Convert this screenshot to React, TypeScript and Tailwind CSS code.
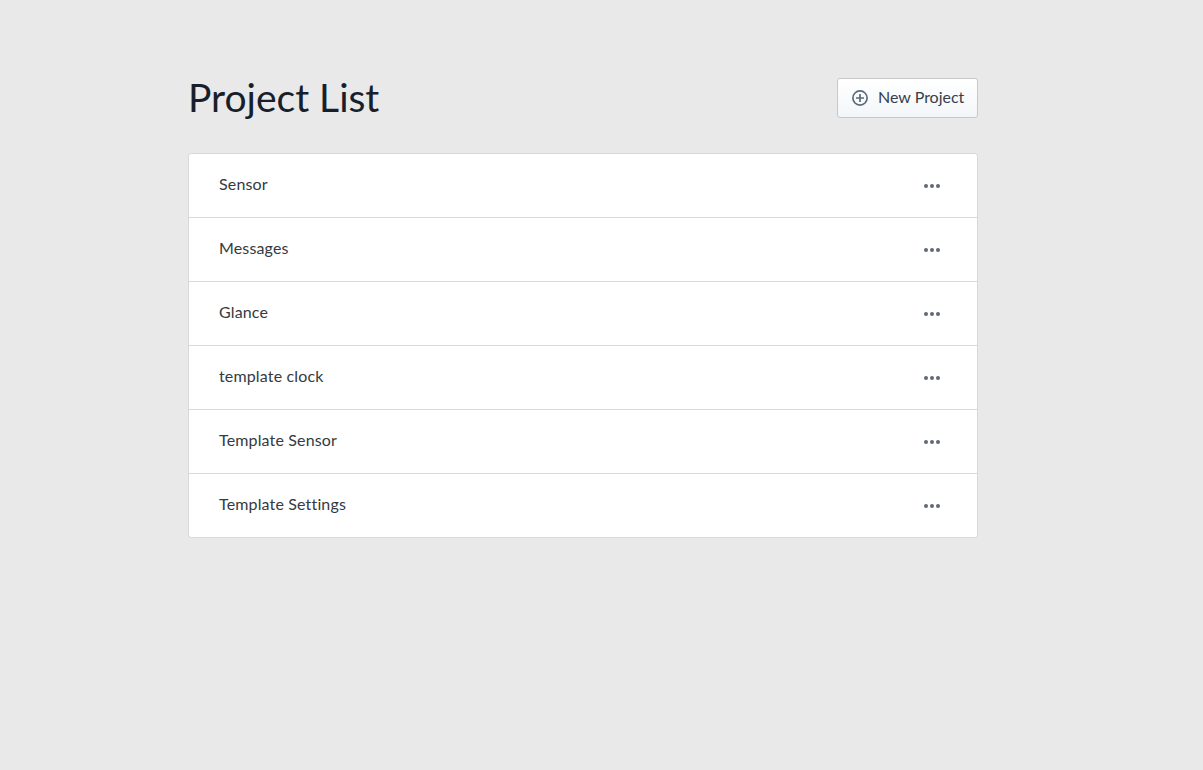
import React from 'react';

const projects = ['Sensor', 'Messages', 'Glance', 'template clock', 'Template Sensor', 'Template Settings'];

function PlusCircle() {
  return (
    <svg viewBox="0 0 16 16" className="h-4 w-4 text-[#5b6b7a]" fill="none" stroke="currentColor" aria-hidden="true">
      <circle cx="8" cy="8" r="7.1" strokeWidth="1.7" />
      <path d="M8 4v8M4 8h8" strokeWidth="1.7" />
    </svg>
  );
}

function Dots() {
  return (
    <svg viewBox="0 0 16 4" className="h-1 w-4 text-[#5f6a76]" fill="currentColor" aria-hidden="true">
      <circle cx="2" cy="2" r="2" />
      <circle cx="8" cy="2" r="2" />
      <circle cx="14" cy="2" r="2" />
    </svg>
  );
}

export default function App() {
  return (
    <div className="min-h-[770px] bg-[#e9e9e9] pl-[188px] pt-[78px] font-['Lato','Open_Sans',sans-serif]">
      <div className="w-[790px]">
        <div className="flex h-10 items-center justify-between">
          <h1 className="text-[39px] leading-[38px] pb-[2px] font-normal text-[#17202a]">Project List</h1>
          <button
            type="button"
            className="flex h-10 w-[141px] items-center rounded-[3px] border border-[#c6c9cc] bg-gradient-to-b from-white to-[#f3f6f9] pl-[14px] text-[16px] text-[#36404a]"
          >
            <PlusCircle />
            <span className="ml-[10px] pb-[2px]">New Project</span>
          </button>
        </div>

        <div className="mt-[35px] rounded-[3px] border border-[#d9d9d9] bg-white">
          {projects.map((name, i) => (
            <div
              key={name}
              className={`flex items-center justify-between pl-[30px] pr-[37px] text-[16px] tracking-[0.15px] text-[#333a40] ${
                i < projects.length - 1 ? 'h-16 border-b border-[#d9d9d9]' : 'h-[63px]'
              }`}
            >
              <span className="pb-1">{name}</span>
              <Dots />
            </div>
          ))}
        </div>
      </div>
    </div>
  );
}
